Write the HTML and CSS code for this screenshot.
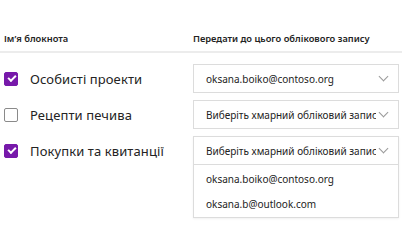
FILE: index.html
```html
<!DOCTYPE html>
<html lang="uk">
<head>
  <meta charset="UTF-8">
  <meta name="viewport" content="width=device-width, initial-scale=1.0">
  <title>Передати блокноти</title>
  <link rel="stylesheet" href="styles.css">
</head>
<body>
  <main class="transfer">
    <div class="head-row">
      <div class="col-title">Ім’я блокнота</div>
      <div class="col-title">Передати до цього облікового запису</div>
    </div>

    <div class="rows">
      <div class="notebook">
        <span class="check checked"></span>
        <span class="notebook-name">Особисті проекти</span>
      </div>
      <div class="picker">
        <div class="select">
          <span class="select-value">oksana.boiko@contoso.org</span>
          <span class="chevron"></span>
        </div>
      </div>

      <div class="notebook">
        <span class="check"></span>
        <span class="notebook-name">Рецепти печива</span>
      </div>
      <div class="picker">
        <div class="select">
          <span class="select-value">Виберіть хмарний обліковий запис</span>
          <span class="chevron"></span>
        </div>
      </div>

      <div class="notebook">
        <span class="check checked"></span>
        <span class="notebook-name">Покупки та квитанції</span>
      </div>
      <div class="picker open">
        <div class="select">
          <span class="select-value">Виберіть хмарний обліковий запис</span>
          <span class="chevron"></span>
        </div>
        <div class="options">
          <div class="option">oksana.boiko@contoso.org</div>
          <div class="option">oksana.b@outlook.com</div>
        </div>
      </div>
    </div>
  </main>
</body>
</html>
```

FILE: styles.css
```css
:root {
  --text-color: #232323;
  --border-color: #dcdcdc;
  --accent: #7719aa;
}

body {
  margin: 0;
  min-height: 250px;
  font-family: 'Noto Sans', sans-serif;
  color: var(--text-color);
  background: white;
}

.transfer {
  padding-top: 32px;
}

.head-row {
  display: grid;
  grid-template-columns: 193px 206px;
  padding-bottom: 6px;
  border-bottom: 2px solid #ececec;
}

.col-title {
  font-size: 9.3px;
  font-weight: 600;
  line-height: 13px;
}

.head-row .col-title:first-child {
  padding-left: 4px;
}

.rows {
  display: grid;
  grid-template-columns: 193px 206px;
  align-items: start;
  row-gap: 7px;
  margin-top: 11px;
}

.notebook {
  height: 29px;
  display: flex;
  align-items: center;
  gap: 12px;
  padding-left: 4px;
}

.check {
  flex: none;
  width: 14px;
  height: 14px;
  box-sizing: border-box;
  border: 1px solid #8a8a8a;
  border-radius: 2px;
  position: relative;
}

.check.checked {
  background: var(--accent);
  border-color: var(--accent);
}

.check.checked::after {
  content: '';
  position: absolute;
  left: 3px;
  top: 2px;
  width: 6px;
  height: 3px;
  border-left: 2px solid white;
  border-bottom: 2px solid white;
  transform: rotate(-45deg);
}

.notebook-name {
  font-size: 13px;
  letter-spacing: 0.1px;
}

.picker {
  border: 1px solid var(--border-color);
}

.picker.open {
  box-shadow: 0 1px 2px rgba(0, 0, 0, 0.06);
}

.select {
  height: 27px;
  display: flex;
  align-items: center;
  padding: 0 9px 0 12px;
  font-size: 10px;
}

.open .select {
  border-bottom: 1px solid var(--border-color);
}

.select-value {
  flex: 1;
  white-space: nowrap;
  overflow: hidden;
}

.chevron {
  flex: none;
  width: 7px;
  height: 7px;
  box-sizing: border-box;
  border-right: 1px solid #9a9a9a;
  border-bottom: 1px solid #9a9a9a;
  transform: rotate(45deg);
  margin: -4px 2px 0 4px;
}

.options {
  padding-top: 2px;
  font-size: 10px;
}

.option {
  height: 25px;
  line-height: 25px;
  padding-left: 12px;
}
```
